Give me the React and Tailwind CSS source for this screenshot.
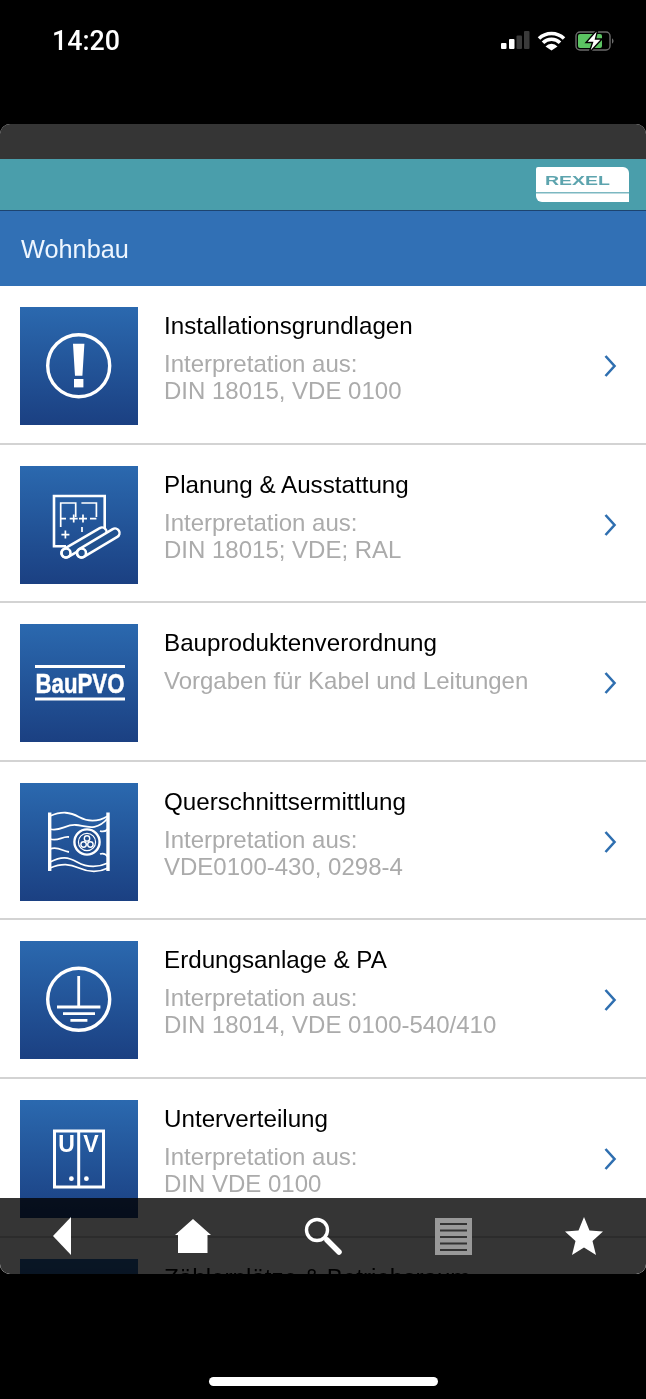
const rows = [
  { title: "Installationsgrundlagen", lines: ["Interpretation aus:", "DIN 18015, VDE 0100"], icon: "alert" },
  { title: "Planung & Ausstattung", lines: ["Interpretation aus:", "DIN 18015; VDE; RAL"], icon: "plan" },
  { title: "Bauproduktenverordnung", lines: ["Vorgaben für Kabel und Leitungen"], icon: "bau" },
  { title: "Querschnittsermittlung", lines: ["Interpretation aus:", "VDE0100-430, 0298-4"], icon: "cable" },
  { title: "Erdungsanlage & PA", lines: ["Interpretation aus:", "DIN 18014, VDE 0100-540/410"], icon: "earth" },
  { title: "Unterverteilung", lines: ["Interpretation aus:", "DIN VDE 0100"], icon: "uv" },
  { title: "Zählerplätze & Betriebsraum", lines: ["Interpretation aus:", "DIN 18015"], icon: "none" },
]

function Glyph({ name }) {
  if (name === "alert") {
    return (
      <>
        <circle cx="58.7" cy="58.7" r="31" fill="none" stroke="#fff" strokeWidth="3.4" />
        <path d="M53 36.7h11.4l-2 32h-7.4z" fill="#fff" />
        <rect x="54" y="72" width="9.4" height="8.4" fill="#fff" />
      </>
    )
  }
  if (name === "plan") {
    return (
      <>
        <path d="M46 80.3H34V30h50.7v32" fill="none" stroke="#fff" strokeWidth="2.6" />
        <path d="M40.7 61V37H55.7V51M61.4 37H76.4V51M40.7 52.6H46M70 52.6H76.4M62 61V66" fill="none" stroke="#fff" strokeWidth="1.7" />
        <path d="M49.7 52.6H57.7M53.7 48.6V56.6M59 52.6H67M63 48.6V56.6M41.4 68.6H49.4M45.4 64.6V72.6" fill="none" stroke="#fff" strokeWidth="1.7" />
        <path d="M46 87 L82 66" stroke="#fff" strokeWidth="11.5" strokeLinecap="round" />
        <path d="M46 87 L82 66" stroke="#21518f" strokeWidth="6.5" strokeLinecap="round" />
        <path d="M61.5 87 L95 67" stroke="#fff" strokeWidth="11.5" strokeLinecap="round" />
        <path d="M61.5 87 L95 67" stroke="#21518f" strokeWidth="6.5" strokeLinecap="round" />
        <circle cx="46" cy="87" r="4.5" fill="none" stroke="#fff" strokeWidth="2.6" />
        <circle cx="61.5" cy="87" r="4.5" fill="none" stroke="#fff" strokeWidth="2.6" />
      </>
    )
  }
  if (name === "bau") {
    return (
      <>
        <rect x="15" y="41" width="90" height="3" fill="#fff" />
        <rect x="15" y="73.5" width="90" height="3" fill="#fff" />
        <text x="15.5" y="69" fontFamily="Liberation Sans" fontWeight="700" fontSize="28.5" fill="#fff" stroke="#fff" strokeWidth="0.5" textLength="89" lengthAdjust="spacingAndGlyphs">BauPVO</text>
      </>
    )
  }
  if (name === "cable") {
    return (
      <>
        <path d="M29.7 29.5v58.5M88 29.5v58.5" stroke="#fff" strokeWidth="3.4" />
        <path d="M30 33c12-5 20-4 29 1s19 5 29-1M30 46c10 3 16-5 26-4s20 7 32-7M30 56c8 3 12-3 19-2M30 66c8-3 12 2 19 3M30 79c12-6 18-5 27 0s20 6 31 1M30 85c12-5 20-4 29 0s19 5 29 0M80 48c3 1 6 0 8-2M80 71c3-1 6 0 8 3" fill="none" stroke="#fff" strokeWidth="1.8" />
        <circle cx="67" cy="59" r="12.6" fill="#1f4c8e" stroke="#fff" strokeWidth="2.4" />
        <circle cx="67" cy="59" r="8.6" fill="none" stroke="#fff" strokeWidth="1.2" />
        <circle cx="67" cy="55.4" r="2.7" fill="none" stroke="#fff" strokeWidth="1.4" />
        <circle cx="63.6" cy="61.5" r="2.7" fill="none" stroke="#fff" strokeWidth="1.4" />
        <circle cx="70.4" cy="61.5" r="2.7" fill="none" stroke="#fff" strokeWidth="1.4" />
      </>
    )
  }
  if (name === "earth") {
    return (
      <>
        <circle cx="58.7" cy="58.3" r="31" fill="none" stroke="#fff" strokeWidth="3.4" />
        <path d="M58.7 35v31M37 66h43.4M43 72.6h32M50.4 79.3h17" fill="none" stroke="#fff" strokeWidth="2.8" />
      </>
    )
  }
  if (name === "uv") {
    return (
      <>
        <rect x="34.5" y="31" width="49" height="56" fill="none" stroke="#fff" strokeWidth="3" />
        <path d="M58.7 31v56" stroke="#fff" strokeWidth="3" />
        <text x="46.5" y="52.3" textAnchor="middle" fontFamily="Liberation Sans" fontWeight="700" fontSize="23" fill="#fff">U</text>
        <text x="71" y="52.3" textAnchor="middle" fontFamily="Liberation Sans" fontWeight="700" fontSize="23" fill="#fff">V</text>
        <circle cx="51.4" cy="78.7" r="2.4" fill="#fff" />
        <circle cx="66.4" cy="78.7" r="2.4" fill="#fff" />
      </>
    )
  }
  return null
}

function Row({ item }) {
  return (
    <div className="flex h-[158.6px] shrink-0 items-center border-b-2 border-[#d3d3d3] bg-white pl-[20px] pr-[29px] pt-[3.4px]">
      <div className="h-[118px] w-[118px] shrink-0 bg-gradient-to-b from-[#2b69af] to-[#1b4082]">
        <svg viewBox="0 0 118 118" className="h-full w-full">
          <Glyph name={item.icon} />
        </svg>
      </div>
      <div className="ml-[26px] flex-1 self-start pt-[22.6px]">
        <div className="text-[24.2px] leading-[27px] text-black">{item.title}</div>
        <div className="mt-[11px] text-[24px] leading-[27px] text-[#ababab]">
          {item.lines.map(l => <div key={l}>{l}</div>)}
        </div>
      </div>
      <svg viewBox="0 0 14 24" className="h-[24px] w-[14px] shrink-0">
        <path d="M2.5 2 L11.5 12 L2.5 22" fill="none" stroke="#2f6fb0" strokeWidth="2.6" />
      </svg>
    </div>
  )
}

function StatusIcons() {
  return (
    <svg viewBox="0 0 116 22" className="h-[22px] w-[116px]">
      <rect x="0" y="13" width="5.5" height="6" rx="1" fill="#fff" />
      <rect x="8" y="9" width="5.5" height="10" rx="1" fill="#fff" />
      <rect x="15.5" y="5.5" width="5.5" height="13.5" rx="1" fill="#3a3a3a" />
      <rect x="23" y="1" width="5.5" height="18" rx="1" fill="#3a3a3a" />
      <path d="M38 8.5a18 18 0 0 1 25 0M42 12.800a12 12 0 0 1 17 0" fill="none" stroke="#fff" strokeWidth="3.6" />
      <path d="M44.5 16.5a8 8 0 0 1 12 0L50.5 20.5Z" fill="#fff" />
      <rect x="75" y="2" width="34" height="18" rx="4" fill="none" stroke="#6b6b6b" strokeWidth="1.4" />
      <rect x="77" y="4" width="24" height="14" rx="2" fill="#5cc463" />
      <path d="M111 8.5c2 .5 2 4.5 0 5z" fill="#6b6b6b" />
      <path d="M97 -1 L85 12.5 H91.5 L88 23 L101 9 H94.5 Z" fill="#fff" stroke="#000" strokeWidth="1.4" />
    </svg>
  )
}

function Nav() {
  return (
    <div className="relative flex h-full items-center justify-between px-[43px]">
      <div className="flex w-[38px] justify-center">
        <svg viewBox="0 0 18 38" className="h-[38px] w-[18px]"><path d="M18 0V38L0 19Z" fill="#fff" /></svg>
      </div>
      <div className="flex w-[38px] justify-center">
        <svg viewBox="0 0 36 34" className="h-[34px] w-[36px]"><path d="M18 0L36 16H32.5V34H3V16H0Z" fill="#fff" /></svg>
      </div>
      <div className="flex w-[38px] justify-center">
        <svg viewBox="0 0 38 38" className="h-[38px] w-[38px]">
          <circle cx="13" cy="13" r="10.5" fill="none" stroke="#fff" strokeWidth="3.4" />
          <path d="M23 23L35 35" stroke="#fff" strokeWidth="5.5" strokeLinecap="round" />
        </svg>
      </div>
      <div className="flex w-[38px] justify-center">
        <svg viewBox="0 0 37 37" className="h-[37px] w-[37px]">
          <rect width="37" height="37" fill="#999" />
          <path d="M5 6H32M5 12.5H32M5 19H32M5 25.5H32M5 32H32" stroke="#333" strokeWidth="2" />
        </svg>
      </div>
      <div className="flex w-[38px] justify-center">
        <svg viewBox="0 0 38 38" className="h-[38px] w-[38px]"><path d="M19 0L24.5 13.5L38 14.5L27.5 24L31 38L19 30.5L7 38L10.5 24L0 14.5L13.5 13.5Z" fill="#fff" /></svg>
      </div>
    </div>
  )
}

export default function App() {
  return (
    <div className="flex h-[1399px] w-[646px] flex-col overflow-hidden bg-black font-['Liberation_Sans',sans-serif]">
      <div className="flex h-[124px] shrink-0 items-start justify-between pl-[52px] pr-[29px] pt-[26px]">
        <span className="font-['Roboto',sans-serif] text-[26.8px] font-medium leading-[30px] text-white">14:20</span>
        <div className="pt-[4px]"><StatusIcons /></div>
      </div>

      <div className="relative h-[1150px] shrink-0 overflow-hidden rounded-[10px] bg-white">
        <div className="h-[35px] bg-[#353535]" />
        <div className="flex h-[52px] justify-end border-b border-[#1d4470] bg-[#4a9eab] pr-[17px] pt-[8px]">
          <div className="h-[35px] w-[93px] rounded-tr-[6px] rounded-bl-[6px] rounded-tl-[2px] bg-white">
            <svg viewBox="0 0 93 35" className="h-full w-full">
              <text x="9" y="17.5" fontFamily="Liberation Sans" fontWeight="700" fontSize="13" fill="#5da4ae" textLength="65" lengthAdjust="spacingAndGlyphs">REXEL</text>
              <rect x="0" y="25" width="93" height="1.5" fill="#7cb8c1" />
            </svg>
          </div>
        </div>
        <div className="flex h-[75px] items-center bg-[#3170b5] pl-[21px] pt-[3px] text-[25.3px] text-[#eef6ff]">Wohnbau</div>
        {rows.map(r => <Row key={r.title} item={r} />)}

        <div className="absolute inset-x-0 bottom-0 h-[76px]">
          <div className="absolute inset-0 bg-[#353535] mix-blend-multiply" />
          <Nav />
        </div>
      </div>

      <div className="flex flex-1 justify-center pt-[103px]">
        <div className="h-[9px] w-[229px] rounded-full bg-white" />
      </div>
    </div>
  )
}
